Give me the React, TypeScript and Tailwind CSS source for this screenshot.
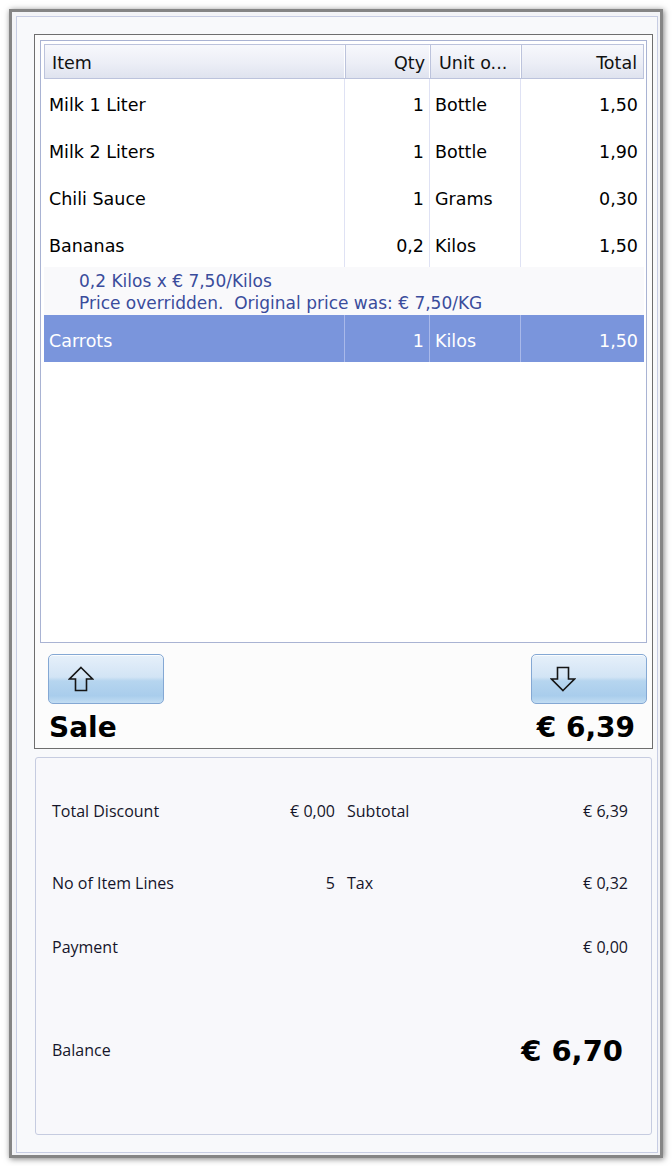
import React from "react";

type Row = { item: string; qty: string; unit: string; total: string; selected?: boolean };

const rows: Row[] = [
  { item: "Milk 1 Liter", qty: "1", unit: "Bottle", total: "1,50" },
  { item: "Milk 2 Liters", qty: "1", unit: "Bottle", total: "1,90" },
  { item: "Chili Sauce", qty: "1", unit: "Grams", total: "0,30" },
  { item: "Bananas", qty: "0,2", unit: "Kilos", total: "1,50" },
];

function UpArrow() {
  return (
    <svg width="26" height="26" viewBox="0 0 26 26">
      <path
        d="M13 1.5 L24.5 13 L18.5 13 L18.5 24.5 L7.5 24.5 L7.5 13 L1.5 13 Z"
        fill="none"
        stroke="#151515"
        strokeWidth="1.6"
        strokeLinejoin="miter"
      />
    </svg>
  );
}

function DownArrow() {
  return (
    <svg width="26" height="26" viewBox="0 0 26 26">
      <path
        d="M13 24.5 L24.5 13 L18.5 13 L18.5 1.5 L7.5 1.5 L7.5 13 L1.5 13 Z"
        fill="none"
        stroke="#151515"
        strokeWidth="1.6"
        strokeLinejoin="miter"
      />
    </svg>
  );
}

function DataRow({ r }: { r: Row }) {
  const sel = r.selected;
  const line = sel ? "border-[#a9b9ea]" : "border-[#dfe2f4]";
  return (
    <div
      className={`flex h-[47px] items-stretch ${sel ? "bg-[#7a95dc] text-white" : "bg-white text-black"}`}
    >
      <div className={`w-[301px] flex items-center pt-[6px] pl-[5px] border-r ${line}`}>{r.item}</div>
      <div className={`w-[85px] flex items-center justify-end pt-[6px] pr-[5px] border-r ${line}`}>{r.qty}</div>
      <div className={`w-[91px] flex items-center pt-[6px] pl-[5px] border-r ${line}`}>{r.unit}</div>
      <div className="w-[122px] flex items-center justify-end pt-[6px] pr-[5px]">{r.total}</div>
    </div>
  );
}

const btn =
  "w-[116px] h-[50px] rounded-[5px] border border-[#84a8d4] bg-[linear-gradient(to_bottom,#e6f0fa_0%,#d2e4f5_46%,#b6d5ef_54%,#a9cdec_85%,#c2ddf3_100%)] shadow-[inset_0_1px_0_rgba(255,255,255,0.8)] flex items-center";

export default function App() {
  return (
    <div className="w-[672px] h-[1166px] bg-white pt-[9px] pl-[9px]">
      <div className="w-[654px] h-[1149px] border-[3px] border-[#858585] shadow-[1px_1px_6px_rgba(0,0,0,0.5)] bg-[#f3f4f7] pt-[4px] pl-[4px] pr-[2px] pb-[2px]">
        <div className="h-full border border-[#c7cde3] bg-[#f8f9fb] pt-[17px] pl-[17px] pr-[4px] flex flex-col">
          {/* Sale panel */}
          <div className="h-[715px] shrink-0 border border-[#6e6e6e] bg-[#fcfcfc] p-[5px] flex flex-col">
            <div
              className="h-[603px] shrink-0 border border-[#a9b3d3] bg-white pt-[3px] pl-[3px] pr-[2px] text-[17.5px] leading-none"
              style={{ fontFamily: '"DejaVu Sans", Verdana, sans-serif' }}
            >
              {/* Header */}
              <div className="flex h-[35px] border border-[#bcc3dc] bg-[linear-gradient(to_bottom,#f7f8fc_0%,#eceef6_55%,#dfe3ef_100%)] text-[#111]">
                <div className="w-[301px] flex items-center pt-[4px] pl-[7px] border-r border-[#bcc3dc] shadow-[inset_-1px_0_0_#ffffff]">Item</div>
                <div className="w-[85px] flex items-center justify-end pt-[4px] pr-[5px] border-r border-[#bcc3dc] shadow-[inset_-1px_0_0_#ffffff]">Qty</div>
                <div className="w-[91px] flex items-center pt-[4px] pl-[8px] border-r border-[#bcc3dc] shadow-[inset_-1px_0_0_#ffffff]">Unit o...</div>
                <div className="flex-1 flex items-center justify-end pt-[4px] pr-[6px]">Total</div>
              </div>
              {rows.map((r) => (
                <DataRow key={r.item} r={r} />
              ))}
              <div className="h-[48px] bg-[#f9f9fb] pl-[35px] pt-[2px] flex flex-col justify-center text-[17px] leading-[22px] text-[#3a4c9c]">
                <div>0,2 Kilos x € 7,50/Kilos</div>
                <div className="whitespace-pre">Price overridden.  Original price was: € 7,50/KG</div>
              </div>
              <DataRow r={{ item: "Carrots", qty: "1", unit: "Kilos", total: "1,50", selected: true }} />
            </div>
            <div className="mt-[11px] shrink-0 flex justify-between pl-[8px]">
              <div className={`${btn} pl-[19px]`}>
                <UpArrow />
              </div>
              <div className={`${btn} pl-[18px]`}>
                <DownArrow />
              </div>
            </div>
            <div
              className="flex-1 min-h-0 flex items-center justify-between pt-[8px] pl-[9px] pr-[12px] text-[28px] leading-none font-bold text-black"
              style={{ fontFamily: '"DejaVu Sans", Verdana, sans-serif' }}
            >
              <span>Sale</span>
              <span>€ 6,39</span>
            </div>
          </div>

          {/* Summary panel */}
          <div
            className="mt-[8px] ml-[1px] mr-[1px] h-[378px] shrink-0 rounded-[3px] border border-[#c6cce0] bg-[#f8f8fb] pl-[16px] pr-[23px] pt-[42px] text-[16px] leading-[22px] text-[#15152a]"
            style={{ fontFamily: '"Open Sans", "Noto Sans", sans-serif' }}
          >
            <div className="grid grid-cols-[283px_281px] gap-x-[12px]">
              <div className="flex justify-between">
                <span>Total Discount</span>
                <span>€ 0,00</span>
              </div>
              <div className="flex justify-between">
                <span>Subtotal</span>
                <span>€ 6,39</span>
              </div>
            </div>
            <div className="mt-[50px] grid grid-cols-[283px_281px] gap-x-[12px]">
              <div className="flex justify-between">
                <span>No of Item Lines</span>
                <span>5</span>
              </div>
              <div className="flex justify-between">
                <span>Tax</span>
                <span>€ 0,32</span>
              </div>
            </div>
            <div className="mt-[42px] flex justify-between">
              <span>Payment</span>
              <span>€ 0,00</span>
            </div>
            <div className="mt-[72px] flex justify-between items-center h-[40px]">
              <span>Balance</span>
              <span
                className="text-[29px] leading-none font-bold text-black mr-[5px] pt-[2px]"
                style={{ fontFamily: '"DejaVu Sans", Verdana, sans-serif' }}
              >
                € 6,70
              </span>
            </div>
          </div>
        </div>
      </div>
    </div>
  );
}
